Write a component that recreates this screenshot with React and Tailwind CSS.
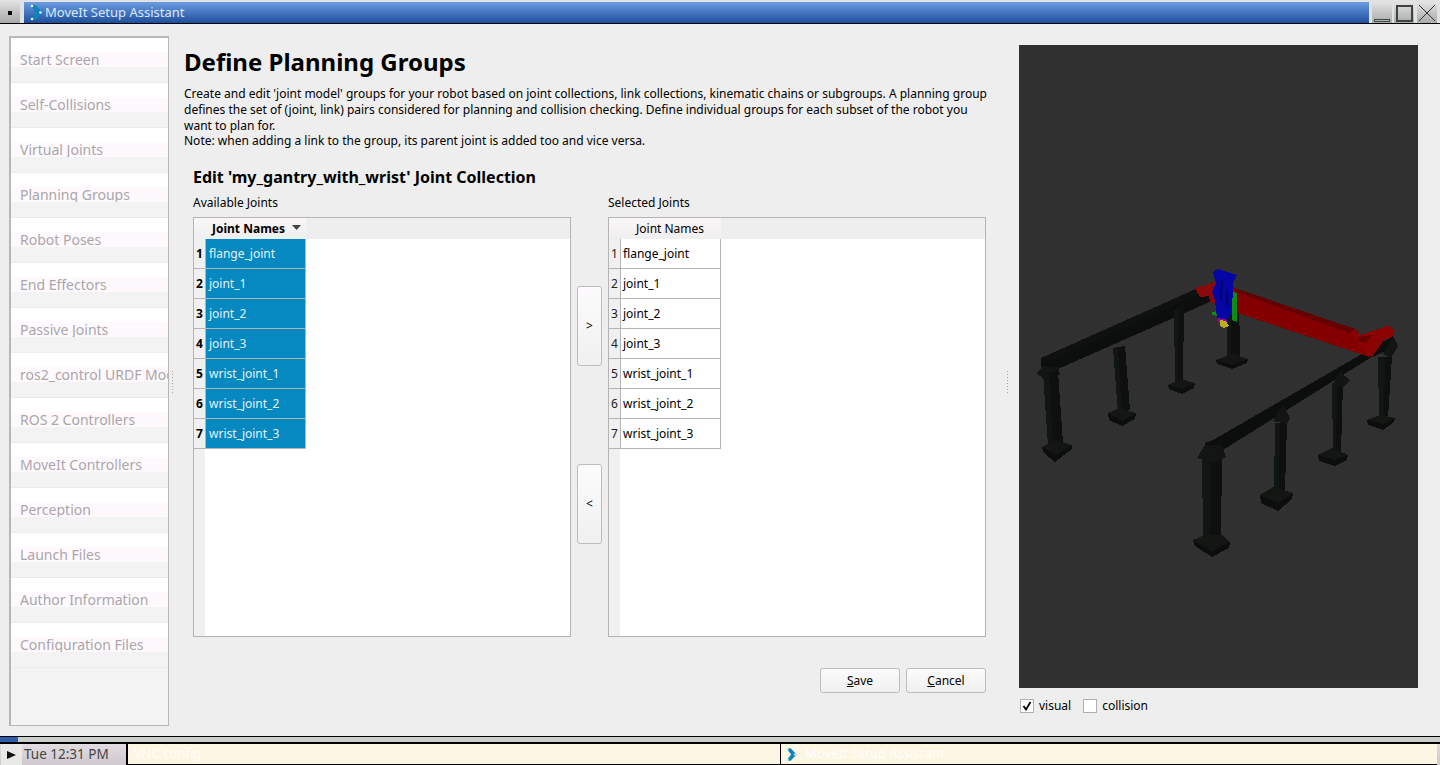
const FONT = { fontFamily: '"Noto Sans", "Open Sans", sans-serif' };

const NAV = ['Start Screen','Self-Collisions','Virtual Joints','Planning Groups','Robot Poses','End Effectors','Passive Joints','ros2_control URDF Modules','ROS 2 Controllers','MoveIt Controllers','Perception','Launch Files','Author Information','Configuration Files'];
const JOINTS = ['flange_joint','joint_1','joint_2','joint_3','wrist_joint_1','wrist_joint_2','wrist_joint_3'];

function MoveItIcon({ className }) {
  return (
    <svg viewBox="0 0 13 17" className={className}>
      <path d="M0.5 1 L5.5 1 L12.5 8.5 L5.5 16 L0.5 16 L6 8.5 Z" fill="#0a86bd" />
      <circle cx="2" cy="2" r="1.3" fill="#dff3fb" />
      <circle cx="10.5" cy="8.5" r="1.3" fill="#dff3fb" />
      <circle cx="2" cy="15" r="1.3" fill="#dff3fb" />
    </svg>
  );
}

function WinButton({ children }) {
  return <div className="w-[20px] h-[20px] bg-gradient-to-b from-[#dfe0df] to-[#a9abaa] flex items-center justify-center">{children}</div>;
}

function TitleBar() {
  return (
    <div className="h-[23px] bg-[#e2e2e2] flex items-end pr-[3px]">
      <div className="w-[20px] h-[21px] bg-gradient-to-b from-[#dedede] to-[#a8a8a8] flex items-center justify-center">
        <div className="w-[4px] h-[4px] bg-black" />
      </div>
      <div className="w-[4px]" />
      <div className="flex-1 h-[21px] bg-gradient-to-b from-[#6b9de2] to-[#1f4f9c] flex items-center pl-[6px] text-[#dbe8f7] text-[13px]">
        <MoveItIcon className="w-[13px] h-[17px] mr-[2px] shrink-0" />
        <span>MoveIt Setup Assistant</span>
      </div>
      <div className="w-[3px]" />
      <div className="flex gap-[2px]">
        <WinButton>
          <div className="w-[16px] h-[3px] border border-[#3d4a45] self-end mb-[1px]" />
        </WinButton>
        <WinButton>
          <div className="w-[17px] h-[17px] border-2 border-[#3d4342]" />
        </WinButton>
        <div className="ml-px">
          <WinButton>
            <svg width="18" height="18" viewBox="0 0 18 18"><path d="M1 1 L17 17 M17 1 L1 17" stroke="#333" strokeWidth="1" /></svg>
          </WinButton>
        </div>
      </div>
    </div>
  );
}

function Sidebar() {
  return (
    <div className="w-[160px] h-[690px] border-2 border-[#b7b7b7] border-r border-b bg-[#f3f3f3] shrink-0 overflow-hidden">
      {NAV.map((n) => (
        <div key={n} className="h-[45px] flex flex-col border-b border-[#ececec] text-[#aaa6a9] text-[14px] whitespace-nowrap overflow-hidden">
          <div className="h-[14px] bg-white shrink-0" />
          <div className="h-[15px] bg-[#fdf9fd] shrink-0 leading-[15px] pl-[9px]">{n}</div>
          <div className="flex-1 bg-[#f4f3f4]" />
        </div>
      ))}
    </div>
  );
}

function Splitter() {
  return (
    <div className="flex flex-col gap-[2px] justify-center items-center">
      {[0,1,2,3,4,5,6,7].map((i) => <div key={i} className="w-px h-px bg-[#a5a5a5]" />)}
    </div>
  );
}

function JointTable({ active }) {
  return (
    <div className="w-[378px] h-[420px] border border-[#b4b4b4] bg-white flex flex-col">
      <div className="h-[21px] bg-[#eeeeee] shrink-0 flex">
        <div className={`w-[112px] h-[21px] bg-gradient-to-b from-[#f9f6f8] to-[#efefef] flex items-center text-[12px] text-black ${active ? 'font-bold pl-[18px]' : 'pl-[27px]'}`}>
          <span>Joint Names</span>
          {active && (
            <svg width="9" height="5" viewBox="0 0 9 5" className="ml-[7px] mb-[3px]"><path d="M0 0 H9 L4.5 5 Z" fill="#444" /></svg>
          )}
        </div>
      </div>
      <div className="flex-1 flex bg-white">
        <div className="w-[11px] bg-[#f0f0f0] shrink-0 flex flex-col">
          {JOINTS.map((_, i) => (
            <div key={i} className={`h-[30px] border-b border-[#b4b4b4] flex items-center justify-center text-[12px] ${active ? 'font-bold text-black' : 'text-[#222]'}`}>{i + 1}</div>
          ))}
        </div>
        <div className="w-[101px] shrink-0 flex flex-col">
          {JOINTS.map((j) => (
            <div key={j} className={`h-[30px] border border-t-0 border-[#b4b4b4] flex items-center text-[12px] ${active ? 'bg-[#0689c1] text-[#e4f3f9] pl-[3px]' : 'bg-white text-black pl-[2px]'} ${j === 'flange_joint' ? 'border-t' : ''}`}>{j}</div>
          ))}
        </div>
      </div>
    </div>
  );
}

function MoveButton({ label }) {
  return <div className="w-[25px] h-[80px] border border-[#bdbdbd] rounded-[3px] bg-gradient-to-b from-[#fdfbfd] to-[#f0f0f0] flex items-center justify-center text-[12px] text-black">{label}</div>;
}

function ActionButton({ k, rest }) {
  return (
    <div className="w-[80px] h-[25px] border border-[#bdbdbd] rounded-[3px] bg-gradient-to-b from-[#fdfbfd] to-[#f0f0f0] flex items-center justify-center text-[12px] text-black">
      <span><span className="underline">{k}</span>{rest}</span>
    </div>
  );
}

function Scene() {
  const rail = '#0b0e0d', railTop = '#0e1110', leg = '#0d100f', legLight = '#111513', base = '#141614', baseDark = '#0c0e0d', cap = '#121513';
  const baseList = [
    { top: '1042,447 1056,440 1072,445 1056,455', side: '1042,447 1056,455 1072,445 1072,449 1055,462 1044,453' },
    { top: '1108,413 1120,408 1136,413 1122,421', side: '1108,413 1122,421 1136,413 1135,419 1122,426 1109,420' },
    { top: '1168,385 1180,379 1195,383 1182,389', side: '1168,385 1182,389 1195,383 1194,388 1182,394 1169,389' },
    { top: '1216,360 1232,354 1248,359 1232,365', side: '1216,360 1232,365 1248,359 1247,363 1232,369 1217,364' },
    { top: '1193,540 1205,535 1222,535 1230,542 1212,551', side: '1193,540 1212,551 1230,542 1229,548 1212,557 1195,546' },
    { top: '1260,495 1273,487 1293,493 1278,503', side: '1260,495 1278,503 1293,493 1292,499 1278,511 1261,503' },
    { top: '1318,455 1332,448 1348,455 1335,460', side: '1318,455 1335,460 1348,455 1347,460 1335,466 1319,461' },
    { top: '1367,420 1380,415 1395,418 1383,424', side: '1367,420 1383,424 1395,418 1394,422 1383,430 1368,425' },
  ];
  const legs = [
    ['1043,373 1058,371 1063,443 1048,446', '1043,373 1049,373 1053,445 1048,446'],
    ['1113,348 1125,346 1130,410 1118,413', '1113,348 1118,348 1122,412 1118,413'],
    ['1174,310 1184,306 1183,380 1175,383', '1174,310 1178,309 1178,382 1175,383'],
    ['1226,290 1239,292 1240,358 1227,358', '1226,290 1231,291 1231,358 1227,358'],
    ['1202,457 1222,457 1221,537 1203,537', '1202,457 1210,457 1210,537 1203,537'],
    ['1275,423 1287,423 1285,490 1274,490', '1275,423 1280,423 1279,490 1274,490'],
    ['1332,383 1343,383 1341,453 1333,453', '1332,383 1337,383 1336,453 1333,453'],
    ['1378,357 1392,357 1388,418 1379,418', '1378,357 1385,357 1384,418 1379,418'],
  ];
  return (
    <svg viewBox="1019 45 399 643" className="w-[399px] h-[643px] block bg-[#303030]" shapeRendering="crispEdges">
      {/* back rail */}
      <polygon points="1041,358 1198,288 1214,300 1058,369 1058,376 1042,376" fill={rail} />
      <polygon points="1041,358 1198,288 1204,292 1050,361" fill={railTop} />
      <polygon points="1036,373 1044,366 1058,367 1060,375 1044,379" fill={cap} />
      {legs.map((p, i) => (
        <g key={i}>
          <polygon points={p[0]} fill={leg} />
          <polygon points={p[1]} fill={legLight} />
        </g>
      ))}
      {baseList.map((b, i) => (
        <g key={i}>
          <polygon points={b.side} fill={baseDark} />
          <polygon points={b.top} fill={base} />
        </g>
      ))}
      {/* right rail */}
      <polygon points="1205,443 1213,440 1393,336 1398,346 1370,358 1223,450 1222,458 1204,458" fill={rail} />
      <polygon points="1197,458 1205,445 1222,445 1226,457 1213,463" fill={cap} />
      <polygon points="1273,421 1283,404 1290,418 1287,424" fill={cap} />
      <polygon points="1333,384 1340,372 1350,380 1343,387" fill={cap} />
      <polygon points="1383,354 1393,338 1398,346 1391,358" fill={cap} />
      {/* red gantry */}
      <polygon points="1195,288 1215,282 1217,292 1217,304 1210,302 1209,296 1200,297" fill="#8a0a0a" />
      <polygon points="1232,287 1357,330 1370,357 1237,313" fill="#840000" />
      <polygon points="1232,287 1355,329 1350,333 1238,293" fill="#650000" />
      <polygon points="1350,331 1360,335 1372,331 1388,326 1395,330 1392,337 1384,340 1372,357 1358,345" fill="#8a0404" />
      <polygon points="1357,337 1372,335 1366,343 1359,342" fill="#6b0000" />
      {/* green */}
      <polygon points="1232,292 1237,293 1237,322 1232,320" fill="#0f8a12" />
      <polygon points="1212,312 1217,311 1217,316 1212,315" fill="#0f8a12" />
      {/* blue */}
      <polygon points="1213,272 1218,269 1237,275 1233,283 1232,313 1227,320 1217,318 1215,300 1212,292 1216,283" fill="#0505a3" />
      <polygon points="1221,280 1223,280 1222,300 1220,300" fill="#03036e" />
      <polygon points="1226,290 1228,290 1228,306 1226,306" fill="#03036e" />
      <polygon points="1217,318 1227,320 1228,323 1219,323" fill="#a000a0" />
      <polygon points="1220,320 1226,321 1229,326 1224,328 1220,326" fill="#b8b020" />
    </svg>
  );
}

function Box({ checked }) {
  return (
    <div className="w-[14px] h-[14px] border border-[#b0b0b0] bg-white flex items-center justify-center">
      {checked && <svg width="10" height="10" viewBox="0 0 10 10"><path d="M1.5 5 L4 8.5 L8.5 1" fill="none" stroke="#000" strokeWidth="1.8" /></svg>}
    </div>
  );
}

export default function App() {
  return (
    <div className="w-[1440px] h-[765px] flex flex-col overflow-hidden bg-[#eeeeee] text-black" style={FONT}>
      <TitleBar />
      <div className="h-px bg-black" />
      <div className="h-[712px] flex pt-[12px] pl-[9px]">
        <Sidebar />
        <div className="w-[6px] flex justify-center h-[691px]"><Splitter /></div>
        <div className="w-[802px] ml-[9px] pt-[10px] shrink-0">
          <h1 className="text-[24px] font-bold leading-[32px] h-[32px]">Define Planning Groups</h1>
          <p className="mt-[8px] text-[12px] leading-[15.75px] w-[806px]">
            Create and edit 'joint model' groups for your robot based on joint collections, link collections, kinematic chains or subgroups. A planning group defines the set of (joint, link) pairs considered for planning and collision checking. Define individual groups for each subset of the robot you want to plan for.<br />Note: when adding a link to the group, its parent joint is added too and vice versa.
          </p>
          <div className="pl-[9px] mt-[18px]">
            <h2 className="text-[16px] font-bold leading-[20px]">Edit 'my_gantry_with_wrist' Joint Collection</h2>
            <div className="flex mt-[8px] text-[12px] leading-[16px]">
              <div className="w-[415px]">Available Joints</div>
              <div>Selected Joints</div>
            </div>
            <div className="flex mt-[6px]">
              <JointTable active />
              <div className="w-[37px] flex flex-col items-center pt-[69px] gap-[98px]">
                <MoveButton label=">" />
                <MoveButton label="<" />
              </div>
              <JointTable />
            </div>
            <div className="flex justify-end gap-[6px] mt-[31px] w-[793px]">
              <ActionButton k="S" rest="ave" />
              <ActionButton k="C" rest="ancel" />
            </div>
          </div>
        </div>
        <div className="w-[33px] shrink-0 pl-[21px] flex h-[691px]"><Splitter /></div>
        <div className="w-[399px] pt-[9px] shrink-0">
          <Scene />
          <div className="flex items-center mt-[11px] ml-px text-[12px] h-[14px]">
            <Box checked />
            <span className="ml-[5px]">visual</span>
            <div className="ml-[12px]"><Box /></div>
            <span className="ml-[5px]">collision</span>
          </div>
        </div>
      </div>
      <div className="h-px bg-black" />
      <div className="h-[5px] flex bg-[#c9cec9]">
        <div className="w-[18px] bg-[#2e5fa8]" />
      </div>
      <div className="h-[2px] bg-black" />
      <div className="flex-1 flex bg-gradient-to-b from-[#e2dce0] to-[#cfc8cf]">
        <div className="w-[21px] ml-px bg-[#e9e9e6] flex items-center justify-center">
          <svg width="9" height="8" viewBox="0 0 9 8"><path d="M0 0 L9 4 L0 8 Z" fill="#111" /></svg>
        </div>
        <div className="w-[104px] pl-[2px] text-[13.5px] text-[#444] leading-[20px]">Tue 12:31 PM</div>
        <div className="w-[654px] border-l-2 border-b border-black bg-[#fdf6e2] text-white text-[13px] pl-[6px] leading-[18px] overflow-hidden">VNC config</div>
        <div className="flex-1 mr-[3px] border-l border-b border-black bg-[#fdf6e2] text-white text-[13px] flex items-center pl-[5px] overflow-hidden">
          <MoveItIcon className="w-[11px] h-[15px] mr-[8px] shrink-0" />
          MoveIt Setup Assistant
        </div>
      </div>
    </div>
  );
}
